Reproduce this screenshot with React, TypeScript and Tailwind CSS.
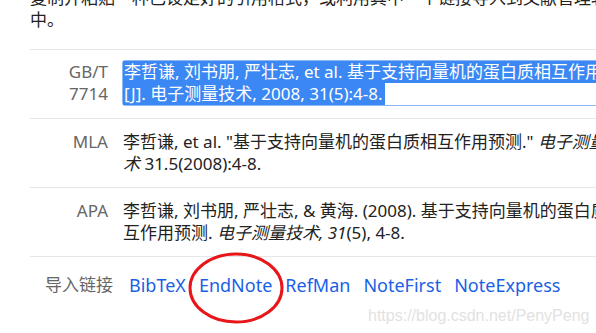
const font = "font-['Noto_Sans','Noto_Sans_CJK_SC',sans-serif]";

function Row({ label, children, tight }: { label: React.ReactNode; children: React.ReactNode; tight?: boolean }) {
  return (
    <div className={`flex border-t border-[#e6e6e6] ${tight ? "pt-[10px] pb-[12px]" : "pt-[12px] pb-[12px]"}`}>
      <div className="w-[78px] shrink-0 text-right text-[#666] leading-[22px]">{label}</div>
      <div className="ml-[15px] whitespace-nowrap leading-[22px] text-[#222]">{children}</div>
    </div>
  );
}

const links = ["BibTeX", "EndNote", "RefMan", "NoteFirst", "NoteExpress"];

export default function App() {
  return (
    <div className={`relative w-[596px] h-[333px] overflow-hidden bg-white ${font} text-[17px]`}>
      <div className="w-[760px] pl-[30px]">
        <p className="-mt-[13px] mb-[18px] leading-[22px] text-[#222] whitespace-nowrap">
          复制并粘贴一种已设定好的引用格式，或利用其中一个链接导入到文献管理软件
          <br />
          中。
        </p>

        <Row tight label={<div className="pt-px">GB/T<br />7714</div>}>
          <div className="-ml-px rounded-[3px] border border-[#8db8f3] bg-white text-white">
            <div className="bg-[#3b87f3] pl-[1px]">李哲谦, 刘书朋, 严壮志, et al. 基于支持向量机的蛋白质相互作用预测</div>
            <div>
              <span className="bg-[#3b87f3] pl-[1px] pr-[2px]">[J]. 电子测量技术, 2008, 31(5):4-8.</span>
            </div>
          </div>
        </Row>

        <Row label="MLA">
          <div>
            李哲谦, et al. "基于支持向量机的蛋白质相互作用预测." <i>电子测量技</i>
          </div>
          <div>
            <i>术</i> 31.5(2008):4-8.
          </div>
        </Row>

        <Row label="APA">
          <div>李哲谦, 刘书朋, 严壮志, &amp; 黄海. (2008). 基于支持向量机的蛋白质相</div>
          <div>
            互作用预测. <i>电子测量技术, 31</i>(5), 4-8.
          </div>
        </Row>

        <div className="flex items-center border-t border-[#e6e6e6] pt-[17px] pl-[15px] leading-[22px]">
          <span className="text-[#666]">导入链接</span>
          <div className="ml-[16px] flex gap-[13px] text-[18px] text-[#1a5fe6]">
            {links.map((l) => (
              <a key={l} className="cursor-pointer">{l}</a>
            ))}
          </div>
        </div>
      </div>

      <svg className="absolute left-[186px] top-[250px]" width="100" height="76" viewBox="0 0 100 76">
        <ellipse cx="50" cy="38" rx="46" ry="34" fill="none" stroke="#e8161b" strokeWidth="3" />
      </svg>

      <div className="absolute left-[368px] top-[304px] font-['Liberation_Sans',sans-serif] text-[16px] text-[#e2e2e2]">
        https://blog.csdn.net/PenyPeng
      </div>
    </div>
  );
}
